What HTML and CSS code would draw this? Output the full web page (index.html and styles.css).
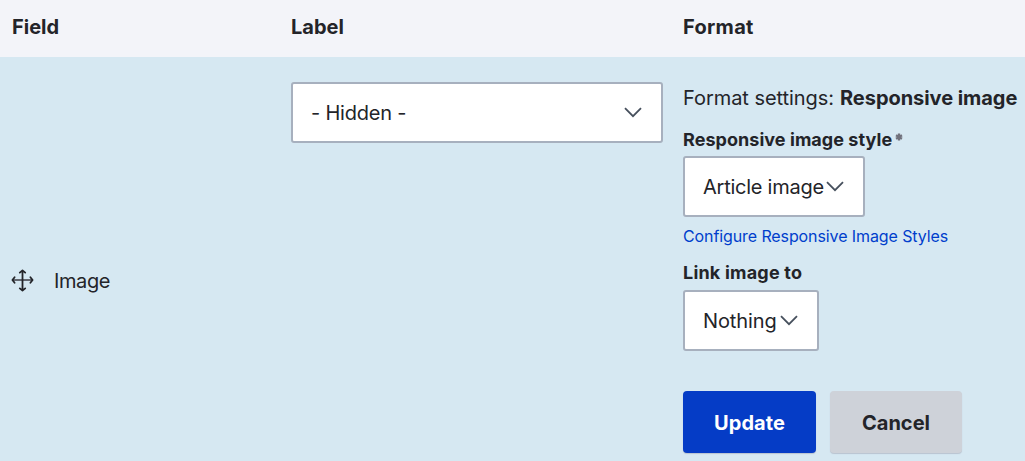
FILE: index.html
```html
<!DOCTYPE html>
<html lang="en">
<head>
<meta charset="utf-8">
<title>Manage display</title>
<link rel="stylesheet" href="styles.css">
</head>
<body>
<div class="table">
  <div class="row head">
    <div class="th t-field">Field</div>
    <div class="th t-label">Label</div>
    <div class="th t-format">Format</div>
  </div>
  <div class="row body">
    <div class="cell field">
      <svg class="move" width="23" height="23" viewBox="0 0 23 23"><path class="bar" d="M2 11h19"/><path d="M11.5 1.5v20M8.8 3.6l2.7-2.2 2.7 2.2M8.8 19.4l2.7 2.2 2.7-2.2M3.6 8.3l-2.2 2.7 2.2 2.7M19.4 8.3l2.2 2.7-2.2 2.7"/></svg>
      <span class="name">Image</span>
    </div>
    <div class="cell label">
      <div class="select wide"><span class="t-hidden">- Hidden -</span><svg class="chev" width="18" height="11" viewBox="0 0 18 11"><path d="M1 1.2l8 8 8-8"/></svg></div>
    </div>
    <div class="cell format">
      <div class="summary"><span class="t-settings">Format settings:</span><b class="t-resp">Responsive image</b></div>
      <div class="caption style-caption"><span class="t-style">Responsive image style</span><svg class="star" width="8" height="8" viewBox="0 0 8 8"><path d="M4 .5v7M1 2.2l6 3.6M7 2.2l-6 3.6"/></svg></div>
      <div class="select article"><span class="t-article">Article image</span><svg class="chev" width="18" height="11" viewBox="0 0 18 11"><path d="M1 1.2l8 8 8-8"/></svg></div>
      <a class="link">Configure Responsive Image Styles</a>
      <div class="caption link-caption"><span class="t-link">Link image to</span></div>
      <div class="select nothing"><span class="t-nothing">Nothing</span><svg class="chev" width="18" height="11" viewBox="0 0 18 11"><path d="M1 1.2l8 8 8-8"/></svg></div>
      <div class="actions">
        <div class="btn primary"><span class="t-update">Update</span></div>
        <div class="btn secondary"><span class="t-cancel">Cancel</span></div>
      </div>
    </div>
  </div>
</div>
</body>
</html>
```
FILE: styles.css
```css
* { box-sizing: border-box; }
body { margin: 0; width: 1025px; height: 461px; overflow: hidden; background: #d6e8f2; color: #232429; font: 20px/24px Inter, "Liberation Sans", sans-serif; }
.row { display: grid; grid-template-columns: 279px 392px 1fr; padding-left: 12px; white-space: nowrap; }
.head { height: 57px; background: #f3f4f9; align-items: center; padding-bottom: 3px; font-weight: 700; }
.t-format { letter-spacing: .3px; }
.body { height: 404px; }
.field { display: flex; align-items: center; align-self: start; margin-top: 211px; height: 24px; }
.name { position: relative; top: 1px; letter-spacing: -.4px; }
.move { margin-left: -1px; margin-right: 20px; fill: none; stroke: #232429; stroke-width: 1.8; stroke-linecap: round; stroke-linejoin: round; }
.bar { stroke: #62666f; }
.label { padding-top: 25px; }
.format { display: flex; flex-direction: column; align-items: flex-start; padding-top: 29px; }
.select { display: flex; align-items: center; height: 61px; padding: 0 19px 0 18px; background: #fff; border: 2px solid #a7b0be; border-radius: 3px; }
.chev { flex: none; fill: none; stroke: #46505d; stroke-width: 1.8; margin-top: -1px; }
.wide { width: 372px; justify-content: space-between; padding-top: 1px; }
.t-hidden { letter-spacing: -.2px; }
.summary { display: flex; gap: 6px; height: 24px; letter-spacing: -.05px; }
.caption { display: flex; height: 24px; font-size: 18px; font-weight: 700; letter-spacing: .05px; }
.style-caption { margin-top: 18px; gap: 3px; }
.star { margin-top: 5px; stroke: #70717c; stroke-width: 2.3; }
.article { width: 182px; margin-top: 4px; justify-content: space-between; }
.t-article { letter-spacing: -.25px; }
.link { margin-top: 7px; height: 24px; font-size: 16px; letter-spacing: -.1px; color: #003ecc; }
.link-caption { margin-top: 13px; letter-spacing: .2px; }
.nothing { width: 136px; margin-top: 5px; justify-content: space-between; }
.t-nothing { letter-spacing: -.1px; }
.actions { display: flex; gap: 14px; margin-top: 40px; }
.btn { display: flex; align-items: center; justify-content: center; height: 62px; padding-top: 1px; border-radius: 4px; font-weight: 700; box-shadow: 0 1px 1px #b9c3d0; }
.primary { width: 133px; background: #053cc6; color: #fff; letter-spacing: .1px; }
.secondary { width: 132px; background: #ced2d9; }
```
